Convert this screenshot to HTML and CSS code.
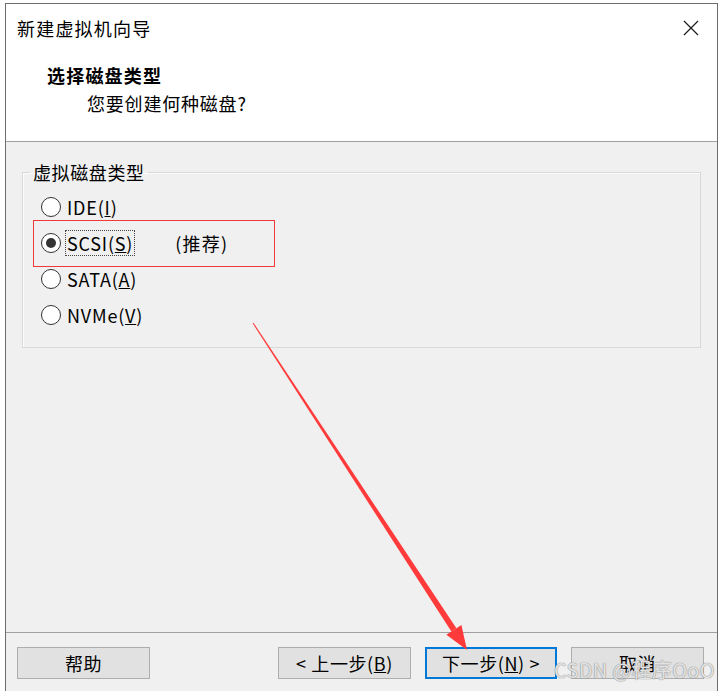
FILE: index.html
```html
<!DOCTYPE html>
<html lang="zh-CN">
<head>
<meta charset="utf-8">
<title>新建虚拟机向导</title>
<link rel="stylesheet" href="styles.css">
</head>
<body>
<div class="window">
  <div class="titlebar">
    <span class="title">新建虚拟机向导</span>
    <svg class="close" width="16" height="16" viewBox="0 0 16 16"><path d="M1 1 L15 15 M15 1 L1 15" stroke="#1a1a1a" stroke-width="1.2" fill="none"/></svg>
  </div>
  <div class="header">
    <div class="h-title">选择磁盘类型</div>
    <div class="h-sub">您要创建何种磁盘?</div>
  </div>
  <div class="content">
    <fieldset class="group">
      <legend>虚拟磁盘类型</legend>
      <div class="row"><span class="radio"></span><span class="label">IDE(<u>I</u>)</span></div>
      <div class="row"><span class="radio checked"></span><span class="label focus">SCSI(<u>S</u>)</span><span class="rec">(推荐)</span></div>
      <div class="row"><span class="radio"></span><span class="label">SATA(<u>A</u>)</span></div>
      <div class="row"><span class="radio"></span><span class="label">NVMe(<u>V</u>)</span></div>
    </fieldset>
  </div>
  <div class="footer">
    <button class="btn">帮助</button>
    <div class="spacer"></div>
    <button class="btn">&lt; 上一步(<u>B</u>)</button>
    <button class="btn primary">下一步(<u>N</u>) &gt;</button>
    <button class="btn">取消</button>
  </div>
</div>
<div class="redbox"></div>
<svg class="arrow" width="722" height="691" viewBox="0 0 722 691">
  <polygon fill="#ff3a3a" points="253.4,322.7 252.6,323.3 451.4,631.5 456.4,628.3"/>
  <polygon fill="#ff3a3a" points="467,650 461.4,625 446.4,634.8"/>
</svg>
<div class="watermark">CSDN @程序OoO</div>
</body>
</html>
```
FILE: styles.css
```css
* { box-sizing: border-box; }
html, body { margin: 0; padding: 0; }
body {
  background: #ffffff;
  width: 722px;
  height: 691px;
  overflow: hidden;
  position: relative;
  font-family: "Noto Sans CJK SC", "Microsoft YaHei", sans-serif;
  font-size: 18px;
  color: #000;
}
.window {
  margin: 3px 0 0 5px;
  width: 713px;
  height: 720px;
  border: 1px solid #6e6e6e;
  border-bottom: none;
  background: #f0f0f0;
  display: flex;
  flex-direction: column;
}
.titlebar {
  height: 48px;
  background: #fff;
  display: flex;
  align-items: center;
  justify-content: space-between;
  padding: 0 18px 0 11px;
}
.title { font-size: 18px; letter-spacing: 1.2px; line-height: 24px; }
.close { display: block; }
.header {
  height: 90px;
  background: #fff;
  border-bottom: 1px solid #a0a0a0;
  padding-top: 11px;
}
.h-title {
  font-weight: bold;
  line-height: 24px;
  padding-left: 41px;
  letter-spacing: 1.2px;
}
.h-sub {
  line-height: 24px;
  margin-top: 4px;
  padding-left: 81px;
  letter-spacing: 0.8px;
}
.content {
  height: 490px;
  background: #f0f0f0;
  padding-top: 18px;
}
.group {
  margin: 0 16px;
  padding: 5px 0 14px 0;
  border: 1px solid #d9d9d9;
  box-shadow: 1px 1px 0 #fbfbfb inset;
  height: 188px;
}
.group legend {
  margin-left: 7px;
  padding: 0 3px;
  line-height: 24px;
  letter-spacing: 0.6px;
}
.row {
  height: 36px;
  display: flex;
  align-items: center;
  padding-left: 18px;
}
.radio {
  width: 20px;
  height: 20px;
  border-radius: 50%;
  border: 1px solid #333;
  background: #fff;
  margin-right: 5px;
  display: flex;
  align-items: center;
  justify-content: center;
}
.radio.checked::after {
  content: "";
  width: 10px;
  height: 10px;
  border-radius: 50%;
  background: #333;
}
.label { line-height: 24px; padding: 0 1px; letter-spacing: 0.8px; }
.focus { outline: 1px dotted #444; outline-offset: 0; }
.rec { margin-left: 41px; letter-spacing: 1.2px; }
.footer {
  border-top: 1px solid #a0a0a0;
  display: flex;
  align-items: flex-start;
  padding: 14px 13px 0 11px;
  gap: 14px;
  flex: 1;
}
.spacer { flex: 1; }
.btn {
  width: 133px;
  height: 32px;
  background: #e1e1e1;
  border: 1px solid #adadad;
  font-family: "Noto Sans CJK SC", "Microsoft YaHei", sans-serif;
  font-size: 18px;
  color: #000;
  padding: 0;
  line-height: 28px;
  letter-spacing: 0.6px;
}
.btn.primary {
  width: 132px;
  border: 2px solid #0078d7;
}
.redbox {
  position: absolute;
  left: 33px;
  top: 220px;
  width: 242px;
  height: 47px;
  border: 1px solid #f03a3a;
}
.arrow {
  position: absolute;
  left: 0;
  top: 0;
}
.watermark {
  position: absolute;
  left: 554px;
  top: 656px;
  font-size: 20px;
  line-height: 28px;
  color: rgba(255, 255, 255, 0.75);
  text-shadow: 0 0 1px #8a8a8a, 0 0 1px #8a8a8a;
  letter-spacing: 0.3px;
  white-space: nowrap;
}
```
